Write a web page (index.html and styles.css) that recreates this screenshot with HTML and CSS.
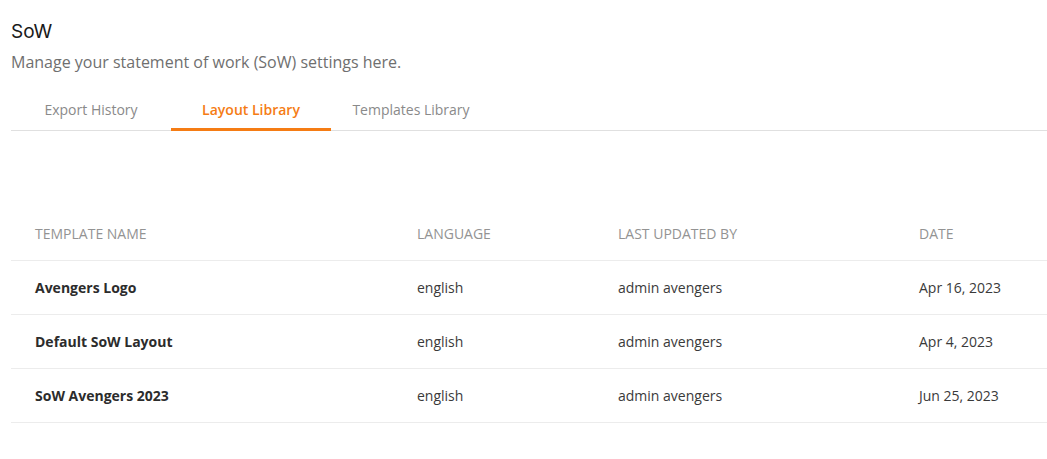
FILE: index.html
```html
<!DOCTYPE html>
<html>
<head>
<meta charset="utf-8">
<link rel="stylesheet" href="styles.css">
</head>
<body>
<div class="page">
  <h1 class="title">SoW</h1>
  <p class="subtitle">Manage your statement of work (SoW) settings here.</p>
  <nav class="tabs">
    <div class="tab">Export History</div>
    <div class="tab active">Layout Library</div>
    <div class="tab">Templates Library</div>
  </nav>
  <div class="table">
    <div class="row head">
      <div class="cell">TEMPLATE NAME</div>
      <div class="cell">LANGUAGE</div>
      <div class="cell">LAST UPDATED BY</div>
      <div class="cell">DATE</div>
    </div>
    <div class="row">
      <div class="cell name">Avengers Logo</div>
      <div class="cell">english</div>
      <div class="cell">admin avengers</div>
      <div class="cell">Apr 16, 2023</div>
    </div>
    <div class="row">
      <div class="cell name">Default SoW Layout</div>
      <div class="cell">english</div>
      <div class="cell">admin avengers</div>
      <div class="cell">Apr 4, 2023</div>
    </div>
    <div class="row">
      <div class="cell name">SoW Avengers 2023</div>
      <div class="cell">english</div>
      <div class="cell">admin avengers</div>
      <div class="cell">Jun 25, 2023</div>
    </div>
  </div>
</div>
</body>
</html>
```

FILE: styles.css
```css
html, body {
  margin: 0;
  padding: 0;
  background: #fff;
}
.page {
  padding: 20px 0 0 11px;
  font-family: "Open Sans", "Liberation Sans", sans-serif;
}
.title {
  margin: 0;
  font-family: "Inter", "Noto Sans", sans-serif;
  font-weight: 400;
  font-size: 19px;
  line-height: 24px;
  color: #1a1a1a;
}
.subtitle {
  margin: 7px 0 0 0;
  font-size: 16px;
  line-height: 22px;
  color: #6f6f6f;
}
.tabs {
  display: flex;
  margin-top: 22px;
  border-bottom: 1px solid #e0e0e0;
}
.tab {
  width: 160px;
  text-align: center;
  font-size: 14px;
  line-height: 20px;
  padding: 5px 0 8px;
  color: #8a8a8a;
  border-bottom: 3px solid transparent;
  margin-bottom: -1px;
}
.tab.active {
  color: #f57c14;
  font-weight: 600;
  border-bottom-color: #f57c14;
}
.table {
  margin-top: 76px;
}
.row {
  display: grid;
  grid-template-columns: 382px 201px 301px 152px;
  height: 53px;
  align-items: center;
  border-bottom: 1px solid #ececec;
}
.cell {
  padding-left: 24px;
  font-size: 14px;
  color: #3a3a3a;
}
.head .cell {
  font-size: 14px;
  font-weight: 400;
  color: #939393;
}
.cell.name {
  font-weight: 700;
  color: #2c2c2c;
}
```
